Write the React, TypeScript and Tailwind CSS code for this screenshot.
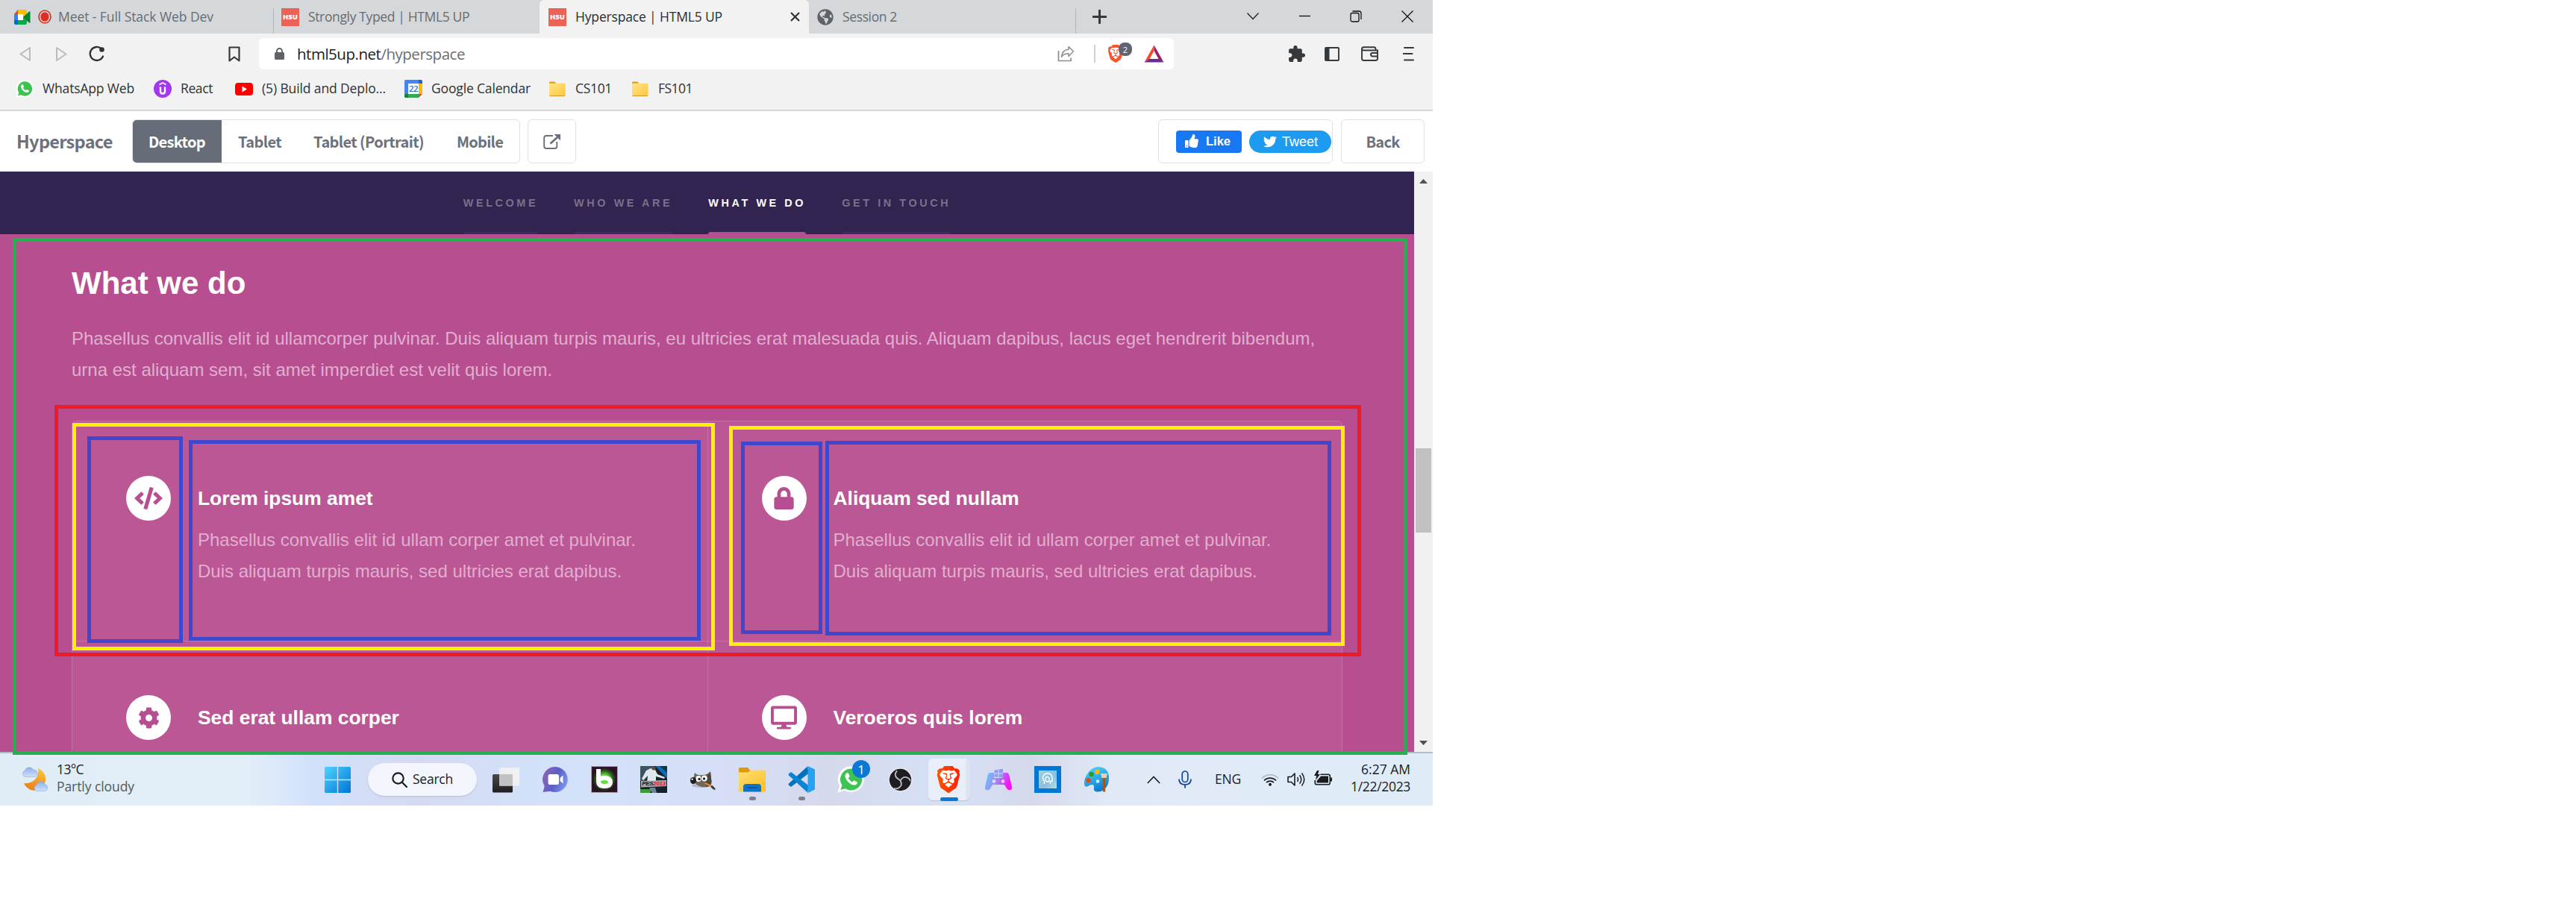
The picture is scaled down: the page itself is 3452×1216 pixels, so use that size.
import type { ReactNode } from "react";
import {
  FaCode,
  FaCog,
  FaDesktop,
  FaGlobeAmericas,
  FaLock,
  FaThumbsUp,
  FaTwitter,
} from "react-icons/fa";
import { MdExtension } from "react-icons/md";
import { SiBrave } from "react-icons/si";

const seg = "font-['Open_Sans','Noto_Sans',sans-serif] whitespace-nowrap leading-none";

/* ---------- shared drawings ---------- */

function Folder({ className }: { className: string }) {
  return (
    <svg className={className} viewBox="0 0 24 22">
      <defs>
        <linearGradient id="folderFill" x1="0" y1="0" x2="1" y2="1">
          <stop offset="0" stopColor="#ffe38a" />
          <stop offset="1" stopColor="#fdc73a" />
        </linearGradient>
      </defs>
      <path d="M0.5 2q0-1.500 1.500-1.500h6l2.500 2.500h-2v5h-8z" fill="#dba11c" />
      <rect x="0.500" y="3" width="22.500" height="18" rx="1.500" fill="url(#folderFill)" />
      <path d="M1 20.500h21.500" stroke="#c9952a" strokeWidth="1" />
    </svg>
  );
}

function H5Badge() {
  return (
    <div className="flex h-6 w-6 shrink-0 items-center justify-center bg-[#ec6256] font-['Open_Sans',sans-serif] text-[9.500px] leading-none font-extrabold text-white">
      H5U
    </div>
  );
}

function WhatsAppMark({ className }: { className: string }) {
  return (
    <svg className={className} viewBox="0 0 36 36">
      <path d="M18.500 0.500a17.300 17.300 0 1 1-8.500 32.300L0.500 35.500l2.700-9A17.300 17.300 0 0 1 18.500 0.500z" fill="#fff" />
      <path d="M18.500 3.500a14.500 14.500 0 1 1-7.700 26.700L4.500 32l1.900-6.200A14.500 14.500 0 0 1 18.500 3.500z" fill="#3cc352" />
      <path
        d="M12.500 9.500c-3.500 2.500-2 7.500 2 11.700s9.300 6 12 2.500c.8-1.200.5-1.900-.3-2.400l-2.900-1.600c-.8-.4-1.300-.2-1.900.5l-1 1.200c-2.400-.8-4.700-3.200-5.600-5.500l1.200-1.100c.6-.6.7-1 .4-1.800l-1.400-3c-.5-1-1.400-1.300-2.500-.5z"
        fill="#fff"
      />
    </svg>
  );
}

/* ---------- browser chrome ---------- */

function MeetIcon() {
  return (
    <svg className="h-[22px] w-[22px] shrink-0" viewBox="0 0 22 20">
      <path d="M0 6l5-6v6z" fill="#ea4335" />
      <path d="M5 0h10q2 0 2 2v5l-5 4V6H5z" fill="#fbbc04" />
      <path d="M0 6h5v8H0z" fill="#2684fc" />
      <path d="M0 14h5v6H2q-2 0-2-2z" fill="#0066da" />
      <path d="M5 14h7v-4l5 4v4q0 2-2 2H5z" fill="#00ac47" />
      <path d="M12 10l8-7.500q1.500-1 1.500 .8v13.400q0 1.800-1.500.8z" fill="#00832d" />
      <path d="M12 10V6H5v8h7z" fill="#fff" />
    </svg>
  );
}

function TabStrip() {
  return (
    <div className="flex h-[45px] bg-[#d4d8db] text-[#686c70]">
      <div className="flex h-full w-[366px] items-center pl-[19px]">
        <MeetIcon />
        <svg className="ml-[10px] h-[19px] w-[18px]" viewBox="0 0 18 19">
          <ellipse cx="9" cy="9.500" rx="8" ry="8.500" fill="none" stroke="#d93025" strokeWidth="1.600" />
          <ellipse cx="9" cy="9.500" rx="5.600" ry="6.300" fill="#d93025" />
        </svg>
        <span className={`${seg} ml-[9px] text-[17.500px] tracking-[-0.070px]`}>Meet - Full Stack Web Dev</span>
      </div>
      <div className="mt-[11px] h-[34px] w-px bg-[#b2b7bb]" />
      <div className="flex h-full w-[356px] items-center pl-[10px]">
        <H5Badge />
        <span className={`${seg} ml-3 text-[17.500px] tracking-[-0.360px]`}>Strongly Typed | HTML5 UP</span>
      </div>
      <div className="flex h-full w-[361px] items-center rounded-t-[6px] bg-[#f2f2f2] pl-3 text-[#2b2e31]">
        <H5Badge />
        <span className={`${seg} ml-3 flex-1 text-[17.500px] font-medium tracking-[-0.160px]`}>Hyperspace | HTML5 UP</span>
        <svg className="mr-3 h-[13px] w-[13px]" viewBox="0 0 13 13">
          <path d="M1 1l11 11M12 1L1 12" stroke="#2f3235" strokeWidth="2.200" />
        </svg>
      </div>
      <div className="flex h-full w-[357px] items-center pl-[11px]">
        <FaGlobeAmericas className="h-[22px] w-[22px] text-[#5f6368]" />
        <span className={`${seg} ml-3 text-[17.500px] tracking-[-0.370px]`}>Session 2</span>
      </div>
      <div className="mt-[11px] h-[34px] w-px bg-[#b2b7bb]" />
      <svg className="mt-[13px] ml-[22px] h-[19px] w-[19px]" viewBox="0 0 19 19">
        <path d="M9.500 1v17M1 9.500h17" stroke="#35393c" strokeWidth="3" strokeLinecap="round" />
      </svg>
      <svg className="mt-[16px] ml-[188px] h-[11px] w-4" viewBox="0 0 16 11">
        <path d="M0.500 1.500l7.500 8 7.500-8" fill="none" stroke="#222" strokeWidth="1.300" />
      </svg>
      <svg className="mt-[15px] ml-[53px] h-[13px] w-4" viewBox="0 0 16 13">
        <path d="M1 6.500h15" stroke="#111" strokeWidth="1.300" />
      </svg>
      <svg className="mt-[14px] ml-[53px] h-4 w-4" viewBox="0 0 16 16">
        <rect x="1" y="3.500" width="11" height="11.500" rx="2" fill="none" stroke="#111" strokeWidth="1.300" />
        <path d="M3.500 1h8.500q3 0 3 3v8" fill="none" stroke="#111" strokeWidth="1.300" />
      </svg>
      <svg className="mt-[14px] ml-[53px] h-4 w-4" viewBox="0 0 16 16">
        <path d="M0.500 0.500l15 15M15.500 0.500l-15 15" stroke="#111" strokeWidth="1.300" />
      </svg>
    </div>
  );
}

function Toolbar() {
  return (
    <div className="flex h-[54px] items-center bg-[#f2f2f2]">
      <svg className="ml-[26px] h-[21px] w-4" viewBox="0 0 16 21">
        <path d="M14 2v17L1.500 10.500z" fill="none" stroke="#b9bbbd" strokeWidth="2" strokeLinejoin="round" />
      </svg>
      <svg className="ml-8 h-[21px] w-4" viewBox="0 0 16 21">
        <path d="M2 2v17l12.500-8.500z" fill="none" stroke="#b9bbbd" strokeWidth="2" strokeLinejoin="round" />
      </svg>
      <svg className="ml-[29px] h-[22px] w-[22px]" viewBox="0 0 22 22">
        <path d="M17 4.500A9 9 0 1 0 19 14.500" fill="none" stroke="#2f3336" strokeWidth="2.300" strokeLinecap="round" />
        <circle cx="17.500" cy="5.500" r="3.300" fill="#2f3336" />
      </svg>
      <svg className="ml-[165px] h-[21px] w-4" viewBox="0 0 16 21">
        <path d="M1.500 1.500h13v18l-6.500-5-6.500 5z" fill="none" stroke="#34383b" strokeWidth="2.200" strokeLinejoin="round" />
      </svg>
      <div className="ml-[25px] flex h-[42px] w-[1226px] items-center rounded-[6px] bg-white">
        <svg className="ml-[21px] h-4 w-[13px]" viewBox="0 0 13 16">
          <path d="M3 7V4.500a3.500 3.500 0 0 1 7 0V7" fill="none" stroke="#5f6368" strokeWidth="1.900" />
          <rect x="0" y="6" width="13" height="10" rx="1.500" fill="#5f6368" />
        </svg>
        <span className={`${seg} ml-[17px] flex-1 text-[20.500px] tracking-[-0.480px] text-[#202124]`}>
          html5up.net<span className="text-[#6a6e72]">/hyperspace</span>
        </span>
        <svg className="h-[22px] w-[23px]" viewBox="0 0 23 22">
          <path d="M1.500 7v13.500h16.500v-4" fill="none" stroke="#8a8d90" strokeWidth="1.700" />
          <path d="M15 1.500l6.500 6.500-6.500 6.500v-3.700c-4.500-.2-7 1-9.500 4.500.5-5.500 3.500-9.500 9.500-10z" fill="none" stroke="#8a8d90" strokeWidth="1.500" strokeLinejoin="round" />
        </svg>
        <div className="ml-[26px] h-6 w-[2px] bg-[#d0d0d2]" />
        <div className="relative ml-[15px] h-7 w-[34px]">
          <SiBrave className="h-7 w-6 text-[#fb542b]" />
          <span className={`${seg} absolute -top-[1px] left-4 flex h-[18px] w-[18px] items-center justify-center rounded-[8px] bg-[#5f6373] text-[11px] text-white`}>
            2
          </span>
        </div>
        <svg className="mr-[13px] ml-[16px] h-[24px] w-[27px]" viewBox="0 0 27 24">
          <path d="M13.500 0.500L0.500 23.500l6.700-4 6.300-11.500z" fill="#ff4724" />
          <path d="M13.500 0.500l13 23-6.700-4-6.300-11.500z" fill="#9e1f63" />
          <path d="M0.500 23.500h26l-6.700-4.500H7.200z" fill="#662d91" />
        </svg>
      </div>
      <MdExtension className="ml-[152px] h-[25px] w-[25px] text-[#35393c]" />
      <svg className="ml-[25px] h-[19px] w-5" viewBox="0 0 20 19">
        <rect x="1" y="1" width="18" height="17" rx="1" fill="none" stroke="#35393c" strokeWidth="1.900" />
        <rect x="1" y="1" width="5.500" height="17" fill="#35393c" />
      </svg>
      <svg className="ml-[29px] h-5 w-[23px]" viewBox="0 0 23 20">
        <path d="M1 4v12.500q0 2.500 2.500 2.500h16q2.500 0 2.500-2.500V5.500H3.500Q1 5.500 1 3.500T3.500 1.200H17q2.500 0 2.500 2.500v1.500" fill="none" stroke="#35393c" strokeWidth="1.900" />
        <path d="M22 9h-7q-2 0-2 2t2 2.500h7" fill="none" stroke="#35393c" strokeWidth="2" />
      </svg>
      <svg className="ml-[33px] h-5 w-[15px]" viewBox="0 0 15 20">
        <path d="M2 2h12M0.500 10h12M2 18.500h12" stroke="#35393c" strokeWidth="2" strokeLinecap="round" />
      </svg>
    </div>
  );
}

function Bookmarks() {
  const t = `${seg} text-[17.500px]`;
  return (
    <div className="flex h-[50px] items-center border-b-2 border-[#d3d8dc] bg-[#f2f2f2] pb-[8px] pl-[21px] text-[#2f3235]">
      <span className="flex w-[185px] items-center gap-[12px]">
        <WhatsAppMark className="h-6 w-6" />
        <span className={`${t} tracking-[-0.160px]`}>WhatsApp Web</span>
      </span>
      <span className="flex w-[109px] items-center gap-3">
        <svg className="h-6 w-6" viewBox="0 0 24 24">
          <ellipse cx="12" cy="12" rx="12" ry="12" fill="#a435f0" />
          <path d="M7.500 6.500L12 4l4.500 2.500" fill="none" stroke="#fff" strokeWidth="1.800" />
          <path d="M9 9.500v6q0 3 3 3t3-3v-6" fill="none" stroke="#fff" strokeWidth="2.400" />
        </svg>
        <span className={`${t} tracking-[-0.400px]`}>React</span>
      </span>
      <span className="flex w-[227px] items-center gap-3">
        <svg className="h-[17px] w-6" viewBox="0 0 24 17">
          <rect width="24" height="17" rx="4" fill="#f00" />
          <path d="M9.500 4.500v8l6.500-4z" fill="#fff" />
        </svg>
        <span className={`${t} tracking-[-0.120px]`}>(5) Build and Deplo...</span>
      </span>
      <span className="flex w-[193px] items-center gap-3">
        <span className="relative flex h-6 w-6 items-center justify-center bg-white">
          <svg className="absolute inset-0 h-6 w-6" viewBox="0 0 24 24">
            <path d="M0 1.500q0-1.500 1.500-1.500H19v5H5v14H0z" fill="#4285f4" />
            <path d="M19 0h3.500q1.500 0 1.500 1.500V5h-5z" fill="#1967d2" />
            <path d="M19 5h5v14h-5z" fill="#fbbc04" />
            <path d="M5 19h14v5H5z" fill="#34a853" />
            <path d="M0 19h5v5H1.500Q0 24 0 22.500z" fill="#188038" />
            <path d="M19 19h5l-5 5z" fill="#ea4335" />
          </svg>
          <span className="relative font-['Open_Sans',sans-serif] text-[11.500px] leading-none font-semibold tracking-[-0.500px] text-[#1a73e8]">22</span>
        </span>
        <span className={`${t} tracking-[-0.160px]`}>Google Calendar</span>
      </span>
      <span className="flex w-[111px] items-center gap-3">
        <Folder className="h-[21px] w-6" />
        <span className={`${t} tracking-[-0.330px]`}>CS101</span>
      </span>
      <span className="flex items-center gap-3">
        <Folder className="h-[21px] w-6" />
        <span className={`${t} tracking-[-0.530px]`}>FS101</span>
      </span>
    </div>
  );
}

/* ---------- demo viewer header ---------- */

function ViewerBar() {
  const src = "font-['Noto_Sans_CJK_SC',sans-serif] leading-none whitespace-nowrap";
  const box = "flex h-[59px] items-center rounded-[6px] border border-[#dfe1e5]";
  return (
    <div className={`flex h-[81px] items-center bg-white pl-[22px] text-[20px] font-bold text-[#6b717c] ${src}`}>
      <span className="w-[155px] text-[23.500px] tracking-[-0.700px]">Hyperspace</span>
      <div className={`${box} w-[520px] overflow-hidden`}>
        <span className="-ml-px flex h-[59px] w-[120px] items-center justify-center bg-[#666d78] tracking-[-0.660px] text-white">Desktop</span>
        <span className="ml-[22px] w-[101px] tracking-[-0.640px]">Tablet</span>
        <span className="w-[192px] tracking-[-0.610px]">Tablet (Portrait)</span>
        <span className="tracking-[-0.740px]">Mobile</span>
      </div>
      <div className={`${box} ml-[10px] w-[65px] justify-center`}>
        <svg className="h-[20px] w-[23px]" viewBox="0 0 23 20">
          <path d="M13 2H4Q1.200 2 1.200 4.800v11.500Q1.200 19 4 19h11.500q2.800 0 2.800-2.700V10" fill="none" stroke="#6b717c" strokeWidth="1.900" />
          <path d="M9.500 12.500L19 4" stroke="#6b717c" strokeWidth="2.800" />
          <path d="M14.500 0H23v8.500z" fill="#6b717c" />
        </svg>
      </div>
      <div className={`${box} ml-[780px] w-[234px] pl-[23px] font-['Liberation_Sans',sans-serif]`}>
        <span className="flex h-[30px] w-[88px] items-center rounded-[4px] bg-[#1877f2] pl-3 text-[16.500px] font-bold text-white">
          <FaThumbsUp className="mr-[10px] -mt-[2px] h-[18px] w-[18px]" />
          Like
        </span>
        <span className="ml-[10px] flex h-[30px] w-[110px] shrink-0 items-center rounded-full bg-[#1d9bf0] pl-[19px] text-[18px] font-normal text-white">
          <FaTwitter className="mr-[7px] h-[18px] w-[18px]" />
          Tweet
        </span>
      </div>
      <div className={`${box} ml-[11px] w-[112px] justify-center tracking-[-0.770px]`}>Back</div>
    </div>
  );
}

/* ---------- site ---------- */

function SiteNav() {
  const links: [string, boolean][] = [
    ["WELCOME", false],
    ["WHO WE ARE", false],
    ["WHAT WE DO", true],
    ["GET IN TOUCH", false],
  ];
  return (
    <nav className="flex h-[84px] justify-center gap-12 bg-[#312450] text-[14.400px] leading-none font-bold tracking-[3.600px]">
      {links.map(([label, on]) => (
        <a
          key={label}
          className={
            on
              ? "flex h-[84px] flex-col justify-between text-white"
              : "flex h-[84px] flex-col justify-between text-[#797189]"
          }
        >
          <span className="pt-[35px]">{label}</span>
          <span className={on ? "h-[3px] rounded-t-[3px] bg-[#b74e91]" : "h-[3px] rounded-t-[3px] bg-[#3e2b60]"} />
        </a>
      ))}
    </nav>
  );
}

function Feature({ icon, title, lines, className }: { icon: ReactNode; title: string; lines?: string[]; className: string }) {
  return (
    <div className={`flex pl-[72px] ${className}`}>
      <span className="flex h-[60px] w-[60px] shrink-0 items-center justify-center rounded-full bg-white text-[#b74e91]">{icon}</span>
      <div className="pt-[11px] pl-[36px]">
        <h3 className="text-[26.400px] leading-[39.600px] font-bold text-white">{title}</h3>
        {lines && (
          <p className="mt-[14px] leading-[42px] whitespace-nowrap">
            {lines.map((l) => (
              <span key={l} className="block">
                {l}
              </span>
            ))}
          </p>
        )}
      </div>
    </div>
  );
}

function WhatWeDo() {
  const lines = [
    "Phasellus convallis elit id ullam corper amet et pulvinar.",
    "Duis aliquam turpis mauris, sed ultricies erat dapibus.",
  ];
  return (
    <section className="h-[694px] overflow-hidden bg-[#b64e90] px-24 pt-[34px] text-[24px] text-[#e1aed0]">
      <h2 className="text-[42px] leading-[63px] font-bold text-white">What we do</h2>
      <p className="mt-[22px] leading-[42px] whitespace-nowrap">
        Phasellus convallis elit id ullamcorper pulvinar. Duis aliquam turpis mauris, eu ultricies erat malesuada quis. Aliquam dapibus, lacus eget hendrerit bibendum,
        <br />
        urna est aliquam sem, sit amet imperdiet est velit quis lorem.
      </p>
      <div className="mt-[47px] grid grid-cols-2 rounded-t-[6px] border border-[#c56ea7] bg-[#bb5794]">
        <Feature icon={<FaCode className="h-[30px] w-[38px]" />} title="Lorem ipsum amet" lines={lines} className="h-[294px] pt-[73px]" />
        <Feature icon={<FaLock className="h-[30px] w-[27px]" />} title="Aliquam sed nullam" lines={lines} className="h-[294px] border-l border-[#c56ea7] pt-[73px]" />
        <Feature icon={<FaCog className="h-[29px] w-[29px]" />} title="Sed erat ullam corper" className="h-[294px] border-t border-[#c56ea7] pt-[72px]" />
        <Feature icon={<FaDesktop className="h-[32px] w-[35px]" />} title="Veroeros quis lorem" className="h-[294px] border-t border-l border-[#c56ea7] pt-[72px]" />
      </div>
    </section>
  );
}

function Scrollbar() {
  return (
    <div className="flex w-[25px] flex-col items-center bg-[#f1f1f1]">
      <svg className="mt-[10px] h-[6px] w-[11px]" viewBox="0 0 11 6">
        <path d="M0 6l5.500-6 5.500 6z" fill="#505050" />
      </svg>
      <div className="mt-[355px] h-[113px] w-[21px] bg-[#c1c1c1]" />
      <svg className="mt-[279px] h-[6px] w-[11px]" viewBox="0 0 11 6">
        <path d="M0 0h11l-5.500 6z" fill="#505050" />
      </svg>
    </div>
  );
}

/* Coloured frames that mark the page's nested boxes. */
function Frames() {
  return (
    <>
      <div className="absolute top-[319px] left-[17px] h-[693px] w-[1869px] border-5 border-[#22b14c]" />
      <div className="absolute top-[543px] left-[73px] h-[337px] w-[1751px] border-5 border-[#ed1c24]" />
      <div className="absolute top-[567px] left-[97px] h-[305px] w-[861px] border-5 border-[#fff200]" />
      <div className="absolute top-[571px] left-[977px] h-[295px] w-[825px] border-5 border-[#fff200]" />
      <div className="absolute top-[585px] left-[117px] h-[277px] w-[128px] border-5 border-[#3f48cc]" />
      <div className="absolute top-[590px] left-[253px] h-[269px] w-[686px] border-5 border-[#3f48cc]" />
      <div className="absolute top-[592px] left-[993px] h-[258px] w-[109px] border-5 border-[#3f48cc]" />
      <div className="absolute top-[591px] left-[1106px] h-[261px] w-[678px] border-5 border-[#3f48cc]" />
    </>
  );
}

/* ---------- taskbar ---------- */

function Weather() {
  return (
    <svg className="h-9 w-9" viewBox="0 0 36 36">
      <defs>
        <linearGradient id="moon" x1="0.700" y1="0" x2="0.300" y2="1">
          <stop offset="0" stopColor="#f5c542" />
          <stop offset="1" stopColor="#f07c14" />
        </linearGradient>
        <linearGradient id="cloud" x1="0" y1="0" x2="0" y2="1">
          <stop offset="0" stopColor="#8fb1e8" />
          <stop offset="1" stopColor="#cfe0fa" />
        </linearGradient>
      </defs>
      <path d="M22 3c9 4 13 13 8 22s-20 12-27-2c12 2 21-8 19-20z" fill="url(#moon)" />
      <path d="M4.500 14.500a4.500 4.500 0 0 1 0-8.500 6 6 0 0 1 11-1 4.800 4.800 0 0 1 1.500 9.500z" fill="url(#cloud)" stroke="#7f9fdb" strokeWidth="0.500" />
      <path d="M20 33.500a4.200 4.200 0 0 1 0-8 5.500 5.500 0 0 1 10.500-1 4.600 4.600 0 0 1 1 9z" fill="url(#cloud)" stroke="#7f9fdb" strokeWidth="0.500" />
    </svg>
  );
}

function Start() {
  return (
    <svg className="h-[35px] w-[35px]" viewBox="0 0 35 35">
      <defs>
        <linearGradient id="win" x1="0" y1="0" x2="1" y2="1" gradientUnits="objectBoundingBox">
          <stop offset="0" stopColor="#4fd4ff" />
          <stop offset="1" stopColor="#0073d4" />
        </linearGradient>
      </defs>
      <path d="M1.500 0H16.800V16.800H0V1.500Q0 0 1.500 0zM18.200 0H33.500Q35 0 35 1.500V16.800H18.200zM0 18.200H16.800V35H1.500Q0 35 0 33.500zM18.200 18.200H35V33.500Q35 35 33.500 35H18.200z" fill="url(#win)" />
    </svg>
  );
}

function TaskView() {
  return (
    <svg className="h-9 w-9" viewBox="0 0 36 36">
      <defs>
        <linearGradient id="tvDark" x1="0" y1="0" x2="0" y2="1">
          <stop offset="0" stopColor="#4a4a4a" />
          <stop offset="1" stopColor="#1d1d1d" />
        </linearGradient>
      </defs>
      <rect x="0" y="11" width="27" height="24.500" rx="1.500" fill="url(#tvDark)" />
      <rect x="9" y="2" width="27" height="24.500" rx="1.500" fill="#f0f0f2" />
      <rect x="9" y="11" width="18" height="15.500" fill="#c2c2c4" />
    </svg>
  );
}

function Chat() {
  return (
    <svg className="h-9 w-9" viewBox="0 0 36 36">
      <defs>
        <linearGradient id="chat" x1="0" y1="0.200" x2="1" y2="0.600">
          <stop offset="0" stopColor="#8e63b5" />
          <stop offset="0.550" stopColor="#5b5fc7" />
          <stop offset="1" stopColor="#7b96f0" />
        </linearGradient>
      </defs>
      <path d="M18 1a17 17 0 1 1-6.500 32.800L1.500 35l2.200-8A17 17 0 0 1 18 1z" fill="url(#chat)" />
      <rect x="8.500" y="11" width="14.500" height="14" rx="2.500" fill="#fff" />
      <path d="M24.500 16l4-3.500v11l-4-3.500z" fill="#fff" />
    </svg>
  );
}

function BeeIcon() {
  return (
    <svg className="h-9 w-9" viewBox="0 0 36 36">
      <defs>
        <radialGradient id="glow">
          <stop offset="0.400" stopColor="#5fe03a" />
          <stop offset="0.750" stopColor="#2c5a20" />
          <stop offset="1" stopColor="#231620" />
        </radialGradient>
      </defs>
      <rect width="36" height="36" fill="#a9a6a8" />
      <rect x="1" y="1" width="34" height="34" fill="#3a1230" />
      <rect x="2.500" y="2.500" width="31" height="31" fill="url(#glow)" />
      <path d="M10 4v17q0 6 8 6t8-5.500-8-5.500q-6 0-8 3.500" fill="none" stroke="#fff" strokeWidth="6" />
    </svg>
  );
}

function GameCover() {
  return (
    <span className="relative flex h-9 w-9 items-center justify-center">
      <svg className="absolute inset-0 h-9 w-9" viewBox="0 0 36 36">
        <rect width="36" height="36" fill="#12232c" />
        <path d="M0 0h18L6 20H0z" fill="#3d535e" />
        <path d="M20 0h16v17z" fill="#0c6cb4" />
        <path d="M26 0h10v9z" fill="#0b3555" />
        <path d="M8 6l6-3 6 2 3 6 10 4-1 2-11-3v8H9l1-9-6 6-2-2z" fill="#dfe6ee" />
        <circle cx="18" cy="3" r="2.600" fill="#6a4a3c" />
        <path d="M1 20l34-1v8L1 28.500z" fill="#a9adb3" />
        <path d="M0 31h16l-3 5H0z" fill="#3d9a35" />
        <path d="M12 29h8l2 7h-6z" fill="#71839a" />
      </svg>
      <span className="relative mt-[11px] font-['Liberation_Sans',sans-serif] text-[8px] leading-none font-bold tracking-[-0.300px] text-[#151515] italic">
        PES<span className="text-[#d5182b]">2013</span>
      </span>
    </span>
  );
}

function Gimp() {
  return (
    <svg className="h-9 w-9" viewBox="0 0 36 36">
      <ellipse cx="16" cy="26" rx="13" ry="3" fill="#9aa0b5" opacity="0.600" />
      <path d="M7 9q4 4 10 3 7 0 11-5l1.500 14q0 6-7 7-9 1-14-4L5 18z" fill="#6e675a" />
      <path d="M20 14q5-1 8-6l1.500 13q0 6-7 7z" fill="#4d483e" />
      <ellipse cx="12" cy="17" rx="3.600" ry="4" fill="#fff" />
      <ellipse cx="20" cy="16.500" rx="3.800" ry="4" fill="#fff" />
      <circle cx="13" cy="17.500" r="1.700" fill="#222" />
      <circle cx="19.500" cy="17" r="1.700" fill="#222" />
      <ellipse cx="5" cy="19.500" rx="4" ry="4.500" fill="#1e1e1e" />
      <circle cx="3.700" cy="17.700" r="1.200" fill="#eee" />
      <path d="M21 23l10 5" stroke="#e8892b" strokeWidth="2.400" />
      <path d="M30 25.500q4 3 5 6.500-4 0-6.500-4z" fill="#3d4043" />
    </svg>
  );
}

function Explorer() {
  return (
    <svg className="h-9 w-9" viewBox="0 0 36 36">
      <defs>
        <linearGradient id="exp" x1="0" y1="0" x2="1" y2="1">
          <stop offset="0" stopColor="#ffdf73" />
          <stop offset="1" stopColor="#fbbf24" />
        </linearGradient>
      </defs>
      <path d="M0 3.500Q0 2 1.500 2h10.500l3 3.500V9H0z" fill="#dd9c0b" />
      <path d="M0 8.500h12.500L16 5.500h18.500Q36 5.500 36 7v27.500H0z" fill="url(#exp)" />
      <path d="M6 34.500V28q0-4 4-4h16q4 0 4 4v6.500z" fill="#1173c7" />
      <path d="M11.500 29h13" stroke="#0b4f93" strokeWidth="1.600" strokeLinecap="round" />
    </svg>
  );
}

function Code() {
  return (
    <svg className="h-9 w-9" viewBox="0 0 36 36">
      <path d="M26 0.500L1 23.500q-1 1 0 2l2 1.800q.8.700 2 0L28 9.500z" fill="#0073bd" />
      <path d="M26 35.500L1 12.500q-1-1 0-2l2-1.800q.8-.7 2 0L28 26.500z" fill="#0a84d2" />
      <path d="M26.500 0l9.500 4.500v27L26.500 36z" fill="#25a2f2" />
    </svg>
  );
}

function Obs() {
  return (
    <svg className="h-[33px] w-[33px]" viewBox="0 0 32 32">
      <circle cx="16" cy="16" r="15.500" fill="#eceaf0" />
      <circle cx="16" cy="16" r="14.200" fill="#1e1d22" />
      <g fill="none" stroke="#bdbcc2" strokeWidth="1.800" strokeLinecap="round">
        <path d="M16 17c-1.500-2-6-2.500-6.500-7.500 0-2 .7-3.500 1.800-4.700" />
        <path d="M16 17c1.500-2.500 4-5.500 8-4.300 2.500.8 4.300 2.500 4.700 4.300" />
        <path d="M16 17c1.800 3 2 6.500-1.500 9.200-1.800 1.200-4 1.500-6 1" />
      </g>
    </svg>
  );
}

function BraveTask() {
  return (
    <span className="relative flex h-14 w-14 items-center justify-center rounded-[6px] border-r-6 border-[#dde4f2] bg-[#e9effa] shadow-[0_1px_1px_#b9c4d8]">
      <svg className="absolute h-0 w-0">
        <defs>
          <linearGradient id="braveFill" x1="0" y1="0" x2="1" y2="0">
            <stop offset="0" stopColor="#ff5500" />
            <stop offset="1" stopColor="#ff1f00" />
          </linearGradient>
        </defs>
      </svg>
      <span className="absolute top-4 left-[17px] h-5 w-[20px] rounded-b-full bg-white" />
      <SiBrave className="relative ml-[3px] h-9 w-[36px] fill-[url(#braveFill)]" />
      <span className="absolute top-[52px] left-4 h-[5px] w-6 rounded-full bg-[#0b78d6]" />
    </span>
  );
}

function Gamepad() {
  return (
    <svg className="h-9 w-9" viewBox="0 0 36 36">
      <defs>
        <linearGradient id="pad" x1="0" y1="0" x2="1" y2="0.300">
          <stop offset="0" stopColor="#62cbfb" />
          <stop offset="0.500" stopColor="#a08cf8" />
          <stop offset="1" stopColor="#fb10f4" />
        </linearGradient>
      </defs>
      <path
        d="M6 9h6v7h12V9h6q2 1 3 6l3 13q.5 4-2 4-3 1-5-2l-3-5H10l-3 5q-2 3-5 2-2.500 0-2-4L3 15q1-5 3-6z"
        fill="url(#pad)"
      />
      <path d="M12.500 5.500l5-.8v4.800h-5zM18.500 4.500l5.500-.8v5.800h-5.500zM12.500 10.500h5v4.500l-5-.5zM18.500 10.500H24v5.300l-5.500-.7z" fill="#8f9bf5" />
      <circle cx="12" cy="20.500" r="2.300" fill="#e3e2fb" />
      <circle cx="24" cy="20.500" r="2.300" fill="#f0d8fb" />
    </svg>
  );
}

function HeadApp() {
  return (
    <svg className="h-9 w-9" viewBox="0 0 36 36">
      <defs>
        <linearGradient id="head" x1="0" y1="0" x2="1" y2="1">
          <stop offset="0" stopColor="#9bd3dc" />
          <stop offset="0.600" stopColor="#8bbfe0" />
          <stop offset="1" stopColor="#b9e2dc" />
        </linearGradient>
      </defs>
      <rect width="36" height="36" fill="#0078d7" />
      <rect x="6" y="6" width="24" height="24" fill="url(#head)" />
      <path d="M13.500 24v-4q-3-3-1.500-6.500 2-4 7-3.500 5 .8 5 6v4.500h-2.500V24" fill="none" stroke="#fff" strokeWidth="1.500" />
      <path d="M16.500 21q-2.500-3-1-5.500 2-2 4 0 1.500 2 0 5.500z" fill="none" stroke="#fff" strokeWidth="1.300" />
    </svg>
  );
}

function Paint() {
  return (
    <svg className="h-9 w-9" viewBox="0 0 36 36">
      <defs>
        <linearGradient id="pal" x1="0.200" y1="0" x2="0.600" y2="1">
          <stop offset="0" stopColor="#4fd8fb" />
          <stop offset="1" stopColor="#0a78cf" />
        </linearGradient>
      </defs>
      <path d="M20 1q14 1 14 15 0 10-6 15-6 5-12 3-3-1-2-5 .7-4-3-4-2 0-5 2-4 2-5-2-1-8 5-16 6-8 14-8z" fill="url(#pal)" />
      <circle cx="6.500" cy="19" r="3.200" fill="#d6501f" />
      <circle cx="10.500" cy="11" r="3.200" fill="#2d9a27" />
      <circle cx="18.500" cy="8" r="3.200" fill="#fdb913" />
      <circle cx="19" cy="20.500" r="2.200" fill="#dff3fd" />
      <path d="M25.500 16h4l-.3 18.500h-3.400z" fill="#a3591b" />
      <path d="M23 10h9l-1.500 6h-6z" fill="#eccfa8" />
    </svg>
  );
}

function Slot({ children, dot }: { children: ReactNode; dot?: boolean }) {
  return (
    <span className="relative flex h-full w-[66px] items-center justify-center">
      {children}
      {dot && <span className="absolute top-[58px] left-[29px] h-[5px] w-[9px] rounded-full bg-[#7e818c]" />}
    </span>
  );
}

function Taskbar() {
  return (
    <div className="h-[72px] border-t-2 border-[#b3bbc3] text-[#1b1c1e]">
      <div className="flex h-full w-[1920px] items-center bg-[linear-gradient(90deg,#e0edf6_0px,#e2eef8_330px,#d1e1fb_420px,#d5daf1_560px,#d2e2fa_730px,#d6dff8_950px,#d5d9ec_1110px,#d5e1f6_1270px,#d5d9ec_1380px,#e0eaf6_1490px,#dfecf8_1920px)]">
        <div className="flex w-[406px] items-center gap-[11px] pl-[29px]">
          <Weather />
          <div className={`${seg} flex flex-col gap-[6px] pb-[4px] text-[17.500px]`}>
            <span className="tracking-[-0.630px]">13°C</span>
            <span className="tracking-[-0.070px] text-[#55585c]">Partly cloudy</span>
          </div>
        </div>
        <div className="flex w-[87px] pl-[29px]">
          <Start />
        </div>
        <div className="flex h-[44px] w-[146px] items-center rounded-full bg-[#f2f5fc] pl-8 shadow-[0_1px_2px_#b5bfd6]">
          <svg className="h-[21px] w-[21px]" viewBox="0 0 21 21">
            <circle cx="8.500" cy="8.500" r="7.200" fill="none" stroke="#1b1c1e" strokeWidth="2.200" />
            <path d="M13.500 13.500l6.500 6.500" stroke="#1b1c1e" strokeWidth="2.200" strokeLinecap="round" />
          </svg>
          <span className={`${seg} ml-[7px] text-[17.500px] tracking-[-0.240px]`}>Search</span>
        </div>
        <div className="ml-[6px] flex h-full w-[858px]">
          <Slot><TaskView /></Slot>
          <Slot><Chat /></Slot>
          <Slot><BeeIcon /></Slot>
          <Slot><GameCover /></Slot>
          <Slot><Gimp /></Slot>
          <Slot dot><Explorer /></Slot>
          <Slot dot><Code /></Slot>
          <Slot>
            <WhatsAppMark className="h-9 w-9" />
            <span className={`${seg} absolute top-[9px] left-[35px] flex h-6 w-6 items-center justify-center rounded-full bg-[#0b78d6] text-[17px] text-white`}>1</span>
          </Slot>
          <Slot><Obs /></Slot>
          <Slot><BraveTask /></Slot>
          <Slot><Gamepad /></Slot>
          <Slot><HeadApp /></Slot>
          <Slot><Paint /></Slot>
        </div>
        <svg className="ml-[34px] h-[11px] w-[18px]" viewBox="0 0 18 11">
          <path d="M0.800 10L9 1.500l8.200 8.500" fill="none" stroke="#1b1c1e" strokeWidth="1.600" />
        </svg>
        <svg className="ml-[24px] h-6 w-[18px]" viewBox="0 0 18 24">
          <rect x="5.200" y="1" width="7.600" height="14.500" rx="3.800" fill="none" stroke="#15489a" strokeWidth="1.700" />
          <path d="M1 11.500q0 7.500 8 7.500t8-7.500M9 19v4.500" fill="none" stroke="#15489a" strokeWidth="1.800" />
        </svg>
        <span className={`${seg} ml-[31px] text-[17.500px] tracking-[-0.210px]`}>ENG</span>
        <svg className="ml-[27px] h-[18px] w-[24px]" viewBox="0 0 24 18">
          <path d="M1 7.500a15 15 0 0 1 22 0" fill="none" stroke="#b1b6bf" strokeWidth="1.600" />
          <path d="M4 10.500a11 11 0 0 1 16 0M7 13.200a7 7 0 0 1 10 0" fill="none" stroke="#1b1c1e" strokeWidth="1.800" />
          <circle cx="12" cy="15.700" r="2" fill="#1b1c1e" />
        </svg>
        <svg className="ml-[11px] h-5 w-6" viewBox="0 0 24 20">
          <path d="M1 6.500h4.500L10 2v16l-4.500-4.500H1z" fill="none" stroke="#1b1c1e" strokeWidth="1.600" strokeLinejoin="round" />
          <path d="M13.500 7q2 3 0 6M16.500 4.200q4.500 5.800 0 11.600M19.500 1.500q6.500 8.500 0 17" fill="none" stroke="#1b1c1e" strokeWidth="1.500" />
        </svg>
        <svg className="-mt-[4px] ml-[12px] h-[20px] w-[24px]" viewBox="0 0 24 20">
          <path d="M8.500 5.200H19q2.300 0 2.300 2.300v9q0 2.300-2.300 2.300H3.500q-2.300 0-2.300-2.300V13" fill="none" stroke="#1b1c1e" strokeWidth="1.600" />
          <path d="M9 7.500h10v9H3.500v-2.500z" fill="#1b1c1e" />
          <path d="M22 9.500h2v5h-2z" fill="#1b1c1e" />
          <path d="M4 0L0 7h3l-1 6 6-8H5L6.500 0z" fill="#1b1c1e" />
        </svg>
        <div className={`${seg} flex flex-1 flex-col items-end gap-[6px] pr-[30px] pb-[4px] text-[17.500px]`}>
          <span>6:27 AM</span>
          <span className="tracking-[-0.320px]">1/22/2023</span>
        </div>
      </div>
    </div>
  );
}

export default function App() {
  return (
    <div className="h-[1216px] w-full overflow-hidden bg-white font-['Liberation_Sans',sans-serif]">
      <div className="relative w-[1920px]">
        <TabStrip />
        <Toolbar />
        <Bookmarks />
        <ViewerBar />
        <div className="flex">
          <div className="w-[1895px]">
            <SiteNav />
            <WhatWeDo />
          </div>
          <Scrollbar />
        </div>
        <Taskbar />
        <Frames />
      </div>
    </div>
  );
}
